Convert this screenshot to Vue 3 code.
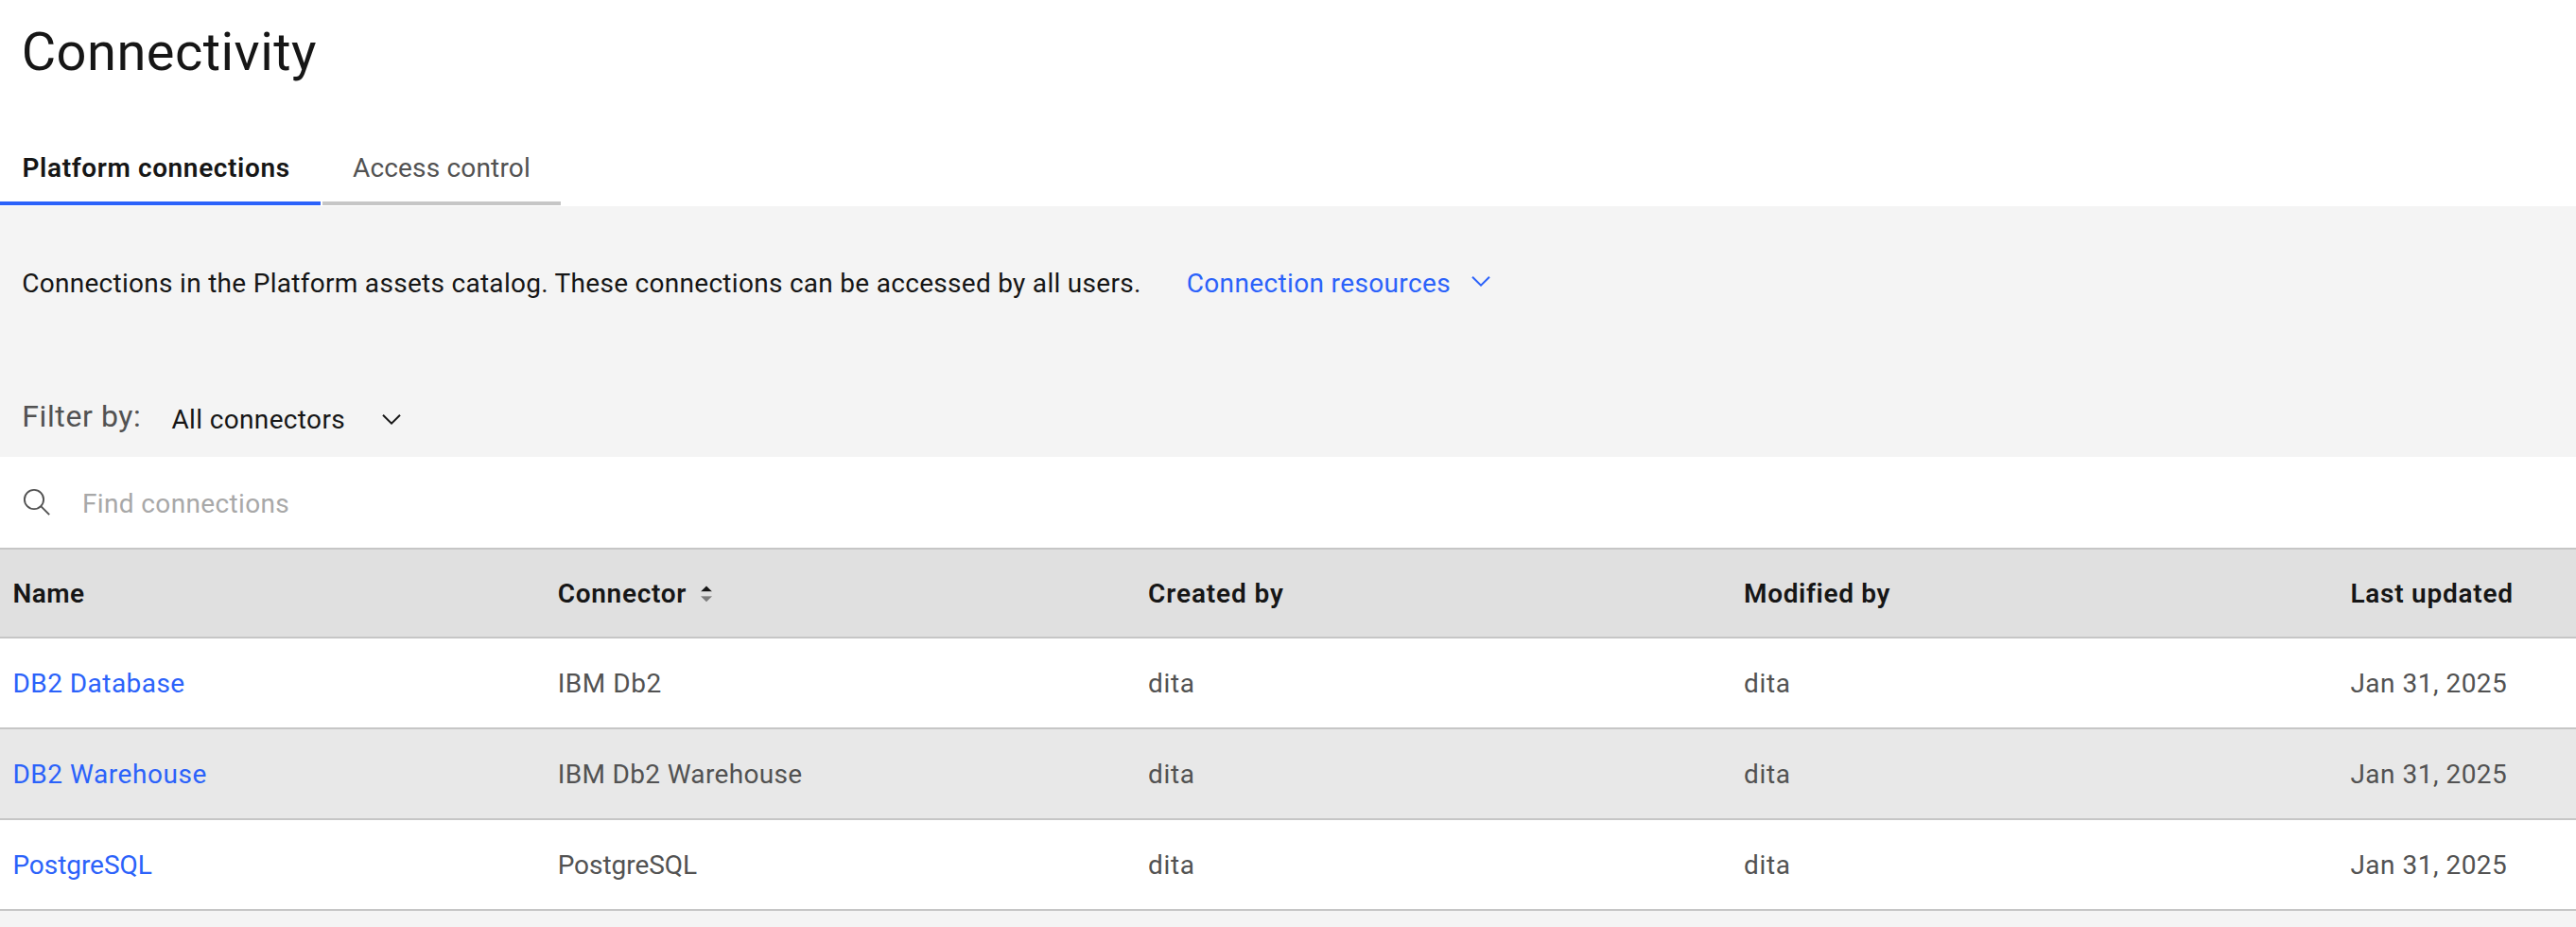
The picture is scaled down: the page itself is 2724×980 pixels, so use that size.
<script setup>
const columns = [
  { key: 'name', label: 'Name', cls: 'ls-51' },
  { key: 'connector', label: 'Connector', cls: 'ls-70', sortable: true },
  { key: 'createdBy', label: 'Created by', cls: 'ls-88' },
  { key: 'modifiedBy', label: 'Modified by', cls: 'ls-64' },
  { key: 'updated', label: 'Last updated', cls: 'ls-76' },
]
const rows = [
  { name: 'DB2 Database', nameCls: 'ls-46', connector: 'IBM Db2', connectorCls: 'ls-55', user: 'dita', updated: 'Jan 31, 2025' },
  { name: 'DB2 Warehouse', nameCls: 'ls-55', connector: 'IBM Db2 Warehouse', connectorCls: 'ls-34', user: 'dita', updated: 'Jan 31, 2025', active: true },
  { name: 'PostgreSQL', nameCls: 'ls-tight', connector: 'PostgreSQL', connectorCls: 'ls-tight', user: 'dita', updated: 'Jan 31, 2025' },
]
</script>

<template>
  <main class="page">
    <header class="header">
      <h1 class="title">Connectivity</h1>
      <nav class="tabs">
        <a class="tab tab-active">Platform connections</a>
        <a class="tab">Access control</a>
      </nav>
    </header>

    <section class="intro">
      <p class="intro-text">Connections in the Platform assets catalog. These connections can be accessed by all users.</p>
      <a class="resources">
        <span>Connection resources</span>
        <svg class="chevron link-chevron" viewBox="0 0 20 12"><path d="M1 1.7 10 10.6 19 1.7" /></svg>
      </a>
    </section>

    <section class="filter">
      <span class="filter-label">Filter by:</span>
      <div class="dropdown">
        <span>All connectors</span>
        <svg class="chevron filter-chevron" viewBox="0 0 20 12"><path d="M1 1.7 10 10.6 19 1.7" /></svg>
      </div>
    </section>

    <div class="search">
      <svg class="search-icon" viewBox="0 0 30 30">
        <circle cx="12" cy="12" r="10.1" />
        <path d="M19.2 19.2 28.2 28.2" />
      </svg>
      <span class="placeholder">Find connections</span>
    </div>

    <div class="table">
      <div class="row head">
        <div v-for="c in columns" :key="c.key" class="cell" :class="c.cls">
          <span>{{ c.label }}</span>
          <svg v-if="c.sortable" class="sort" viewBox="0 0 12 18">
            <path class="sort-up" d="M6 .4 11.8 6.2H.2z" />
            <path class="sort-edge" d="M.2 6.2h11.6v.8H.2zM.2 11h11.6v.8H.2z" />
            <path class="sort-down" d="M.2 11.4h11.6L6 17.2z" />
          </svg>
        </div>
      </div>
      <div v-for="r in rows" :key="r.name" class="row" :class="{ active: r.active }">
        <div class="cell"><a class="link" :class="r.nameCls">{{ r.name }}</a></div>
        <div class="cell" :class="r.connectorCls">{{ r.connector }}</div>
        <div class="cell ls-64">{{ r.user }}</div>
        <div class="cell ls-64">{{ r.user }}</div>
        <div class="cell ls-50">{{ r.updated }}</div>
      </div>
    </div>
  </main>
</template>

<style>
body { background: #f4f4f4; }
</style>

<style scoped>
.page {
  box-sizing: border-box;
  height: 980px;
  overflow: hidden;
  background: #f4f4f4;
  color: #161616;
  font: 400 28px/33px Roboto, "Liberation Sans", sans-serif;
}
.header {
  box-sizing: border-box;
  height: 218px;
  padding-top: 22px;
  background: #fff;
}
.title {
  margin: 0 0 0 22.7px;
  font-size: 56px;
  line-height: 66px;
  font-weight: 400;
  letter-spacing: .46px;
}
.tabs { display: flex; gap: 2px; margin-top: 73px; }
.tab {
  box-sizing: border-box;
  width: 252px;
  height: 56px;
  padding-left: 32px;
  border-bottom: 4px solid #c6c6c6;
  color: #525252;
  letter-spacing: .17px;
}
.tab-active {
  width: 339px;
  padding-left: 23.5px;
  border-bottom-color: #2b62fa;
  color: #161616;
  font-weight: 600;
  letter-spacing: .62px;
}
.intro {
  display: flex;
  height: 33px;
  padding: 65px 0 0 23.2px;
}
.intro-text {
  width: 1231.5px;
  margin: 0;
  letter-spacing: .29px;
  white-space: nowrap;
}
.resources { display: flex; color: #2b62fa; letter-spacing: .36px; }
.chevron {
  width: 20px;
  height: 12px;
  fill: none;
  stroke: currentColor;
  stroke-width: 2;
}
.link-chevron { margin: 8px 0 0 22px; }
.filter {
  display: flex;
  height: 62px;
  padding: 105px 0 0 23.3px;
}
.filter-label {
  width: 158.2px;
  color: #525252;
  font-size: 32px;
  line-height: 38px;
  letter-spacing: .59px;
}
.dropdown { display: flex; padding-top: 6px; letter-spacing: .35px; }
.filter-chevron { margin: 10px 0 0 38.5px; }
.search {
  display: flex;
  align-items: center;
  height: 96px;
  padding-left: 24px;
  background: #fff;
}
.search-icon {
  width: 30px;
  height: 30px;
  fill: none;
  stroke: #525252;
  stroke-width: 1.9;
}
.placeholder {
  margin: 3px 0 0 33px;
  color: #a8a8a8;
  letter-spacing: .36px;
}
.row {
  box-sizing: border-box;
  display: grid;
  grid-template-columns: 576.3px 624.4px 630px 641.3px 1fr;
  height: 96px;
  padding: 31px 0 0 13.4px;
  border-bottom: 2px solid #c6c6c6;
  background: #fff;
  color: #525252;
}
.head {
  padding-top: 30px;
  border-top: 2px solid #c6c6c6;
  background: #e0e0e0;
  color: #161616;
  font-weight: 600;
}
.active { background: #e8e8e8; }
.cell { display: flex; white-space: nowrap; }
.link { color: #2b62fa; }
.sort { width: 12px; height: 18px; margin: 8px 0 0 14.5px; }
.sort-up { fill: #161616; }
.sort-edge { fill: #b8b8b8; }
.sort-down { fill: #7c7c7c; }
.ls-tight { letter-spacing: -.05px; }
.ls-34 { letter-spacing: .34px; }
.ls-46 { letter-spacing: .46px; }
.ls-50 { letter-spacing: .5px; }
.ls-51 { letter-spacing: .51px; }
.ls-55 { letter-spacing: .55px; }
.ls-64 { letter-spacing: .64px; }
.ls-70 { letter-spacing: .7px; }
.ls-76 { letter-spacing: .76px; }
.ls-88 { letter-spacing: .88px; }
</style>
